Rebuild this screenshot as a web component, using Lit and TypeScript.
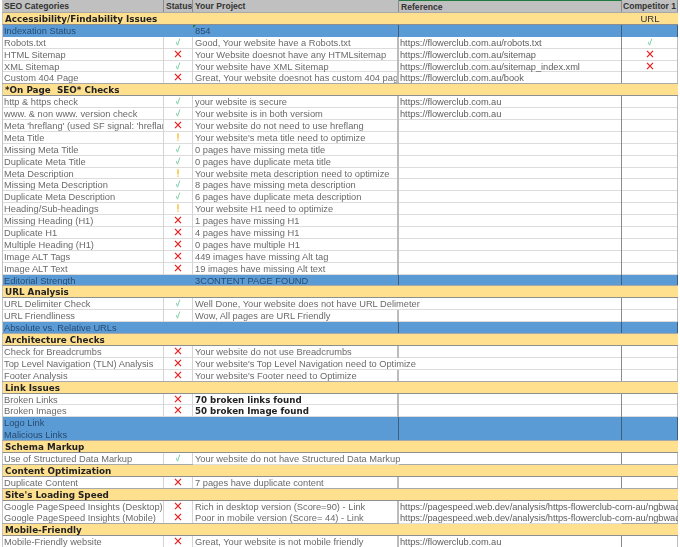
import { LitElement, html, css } from "lit";
import { customElement } from "lit/decorators.js";

type Mark = "ok" | "no" | "warn" | "";
type Row =
  | { kind: "section"; label: string; extra?: string }
  | { kind: "blue"; label: string; project?: string; tick?: boolean }
  | {
      kind: "data";
      label: string;
      mark: Mark;
      project: string;
      ref?: string;
      comp?: Mark;
      bold?: boolean;
      spill?: boolean;
      refSpill?: boolean;
    };

const sec = (label: string, extra?: string): Row => ({ kind: "section", label, extra });
const blue = (label: string, project?: string, tick?: boolean): Row => ({ kind: "blue", label, project, tick });
const row = (label: string, mark: Mark, project: string, ref = "", comp: Mark = ""): Row => ({
  kind: "data",
  label,
  mark,
  project,
  ref,
  comp,
});
const spill = (label: string, mark: Mark, project: string): Row => ({
  kind: "data",
  label,
  mark,
  project,
  spill: true,
});
const bold = (label: string, mark: Mark, project: string): Row => ({
  kind: "data",
  label,
  mark,
  project,
  bold: true,
});
const speed = (label: string, project: string): Row => ({
  kind: "data",
  label,
  mark: "no",
  project,
  ref: SPEED,
  refSpill: true,
});

const SITE = "https://flowerclub.com.au";
const SPEED = "https://pagespeed.web.dev/analysis/https-flowerclub-com-au/ngbwadmxyz";

const rows: Row[] = [
  sec("Accessibility/Findability Issues", "URL"),
  blue("Indexation Status", "854", true),
  row("Robots.txt", "ok", "Good, Your website have a Robots.txt", SITE + "/robots.txt", "ok"),
  row("HTML Sitemap", "no", "Your Website doesnot have any HTMLsitemap", SITE + "/sitemap", "no"),
  row("XML Sitemap", "ok", "Your website have XML Sitemap", SITE + "/sitemap_index.xml", "no"),
  row("Custom 404 Page", "no", "Great, Your website doesnot has custom 404 page", SITE + "/book"),
  sec("*On Page  SEO* Checks"),
  row("http & https check", "ok", "your website is secure", SITE),
  row("www. & non www. version check", "ok", "Your website is in both versiom", SITE),
  row("Meta 'hreflang' (used SF signal: 'hreflang')", "no", "Your website do not need to use hreflang"),
  row("Meta Title", "warn", "Your website's meta title need to optimize"),
  row("Missing Meta Title", "ok", "0 pages have missing meta title"),
  row("Duplicate Meta Title", "ok", "0 pages have duplicate meta title"),
  row("Meta Description", "warn", "Your website meta description need to optimize"),
  row("Missing Meta Description", "ok", "8 pages have missing meta description"),
  row("Duplicate Meta Description", "ok", "6 pages have duplicate meta description"),
  row("Heading/Sub-headings", "warn", "Your website H1 need to optimize"),
  row("Missing Heading (H1)", "no", "1 pages have missing H1"),
  row("Duplicate H1", "no", "4 pages have missing H1"),
  row("Multiple Heading (H1)", "no", "0 pages have multiple H1"),
  row("Image ALT Tags", "no", "449 images have missing Alt tag"),
  row("Image ALT Text", "no", "19 images have missing Alt text"),
  blue("Editorial Strength", "3CONTENT PAGE FOUND"),
  sec("URL Analysis"),
  spill("URL Delimiter Check", "ok", "Well Done, Your website does not have URL Delimeter"),
  row("URL Friendliness", "ok", "Wow, All pages are URL Friendly"),
  blue("Absolute vs. Relative URLs"),
  sec("Architecture Checks"),
  row("Check for Breadcrumbs", "no", "Your website do not use Breadcrumbs"),
  spill("Top Level Navigation (TLN) Analysis", "no", "Your website's Top Level Navigation need to Optimize"),
  row("Footer Analysis", "no", "Your website's Footer need to Optimize"),
  sec("Link Issues"),
  bold("Broken Links", "no", "70 broken links found"),
  bold("Broken Images", "no", "50 broken Image found"),
  blue("Logo Link"),
  blue("Malicious Links"),
  sec("Schema Markup"),
  spill("Use of Structured Data Markup", "ok", "Your website do not have Structured Data Markup"),
  sec("Content Optimization"),
  row("Duplicate Content", "no", "7 pages have duplicate content"),
  sec("Site's Loading Speed"),
  speed("Google PageSpeed Insights (Desktop)", "Rich in desktop version (Score=90) - Link"),
  speed("Google PageSpeed Insights (Mobile)", "Poor in mobile version (Score= 44) - Link"),
  sec("Mobile-Friendly"),
  row("Mobile-Friendly website", "no", "Great, Your website is not mobile friendly", SITE),
];

@customElement("app-root")
export class AppRoot extends LitElement {
  private mark(m?: Mark) {
    if (m === "ok") {
      return html`<svg class="icon" viewBox="0 0 8 10">
        <path d="M2.2 5 L3.5 8.2 L5.8 1.6" fill="none" stroke="#7fd0a8" stroke-width="1" />
      </svg>`;
    }
    if (m === "no") {
      return html`<svg class="icon" viewBox="0 0 8 10">
        <path d="M1 1.8 L7 8.2 M7 1.8 L1 8.2" fill="none" stroke="#ee1c1c" stroke-width="1.2" />
      </svg>`;
    }
    if (m === "warn") {
      return html`<svg class="icon" viewBox="0 0 8 10">
        <path d="M4 1.2 V6.5 M4 7.4 V8.8" fill="none" stroke="#f5b81f" stroke-width="1.3" />
      </svg>`;
    }
    return "";
  }

  private renderRow(r: Row) {
    if (r.kind === "section") {
      return html`<div class="row section">
        <div class="label">${r.label}</div>
        <div class="extra">${r.extra ?? ""}</div>
      </div>`;
    }
    if (r.kind === "blue") {
      return html`<div class="row blue">
        <div class="cell first">${r.label}</div>
        <div class="cell"></div>
        <div class="cell text wide ${r.tick ? "tick" : ""}">${r.project ?? ""}</div>
        <div class="cell"></div>
        <div class="cell"></div>
      </div>`;
    }
    return html`<div class="row data">
      <div class="cell first">${r.label}</div>
      <div class="cell status">${this.mark(r.mark)}</div>
      <div class="cell text wide ${r.bold ? "bold" : ""} ${r.spill ? "spill" : ""}">${r.project}</div>
      <div class="cell ref ${r.refSpill ? "spill" : ""}">${r.ref ?? ""}</div>
      <div class="cell status comp">${this.mark(r.comp)}</div>
    </div>`;
  }

  render() {
    return html`
      <div class="sheet">
        <div class="row head">
          <div class="cell first">SEO Categories</div>
          <div class="cell status-head">Status</div>
          <div class="cell text">Your Project</div>
          <div class="cell text active">Reference</div>
          <div class="cell title-comp">Competitor 1</div>
        </div>
        ${rows.map((r) => this.renderRow(r))}
      </div>
    `;
  }

  static styles = css`
    :host {
      display: block;
      width: 680px;
      height: 547px;
      overflow: hidden;
      background: #fff;
      font-family: "Liberation Sans", Arial, sans-serif;
      font-size: 9.3px;
      color: #6a6a6a;
    }
    .sheet {
      width: 678px;
      padding-left: 2px;
      box-sizing: border-box;
      filter: blur(0.3px);
    }
    .row {
      display: grid;
      grid-template-columns: 161px 29px 206px 223px 56px;
      height: 11.9px;
      line-height: 12px;
      white-space: nowrap;
      box-sizing: border-box;
      border-left: 1px solid #c4c4c4;
      overflow: hidden;
    }
    .cell {
      min-width: 0;
      overflow: hidden;
      box-sizing: border-box;
      border-right: 1px solid #d4d4d4;
      box-shadow: inset 0 -1px 0 #dcdcdc;
    }
    .first {
      padding-left: 1px;
    }
    .text {
      padding-left: 2px;
    }
    .wide {
      border-right: 2px solid #bcbcbc;
    }
    .ref {
      padding-left: 1px;
      color: #5e5e5e;
      border-right-color: #8a8a8a;
      letter-spacing: -0.06px;
    }
    .comp {
      border-right-color: #bcbcbc;
    }
    .status {
      display: flex;
      align-items: flex-start;
      justify-content: center;
    }
    .icon {
      width: 8px;
      height: 10px;
    }
    .bold {
      font-family: "DejaVu Sans", sans-serif;
      font-weight: 700;
      font-size: 8.7px;
      color: #222;
    }
    .spill {
      overflow: visible;
      border-right: 0;
      position: relative;
      z-index: 1;
    }
    .head {
      height: 13px;
      background: #c0c0c0;
      font-weight: 700;
      font-size: 8.6px;
      color: #333;
    }
    .head .cell {
      border-right-color: #8c8c8c;
      box-shadow: inset 0 -1px 0 #8c8c8c;
      line-height: 13px;
    }
    .head .status-head {
      padding-left: 2px;
    }
    .head .active {
      border-top: 1px solid #1f7a3e;
      line-height: 12px;
    }
    .head .title-comp {
      text-align: center;
    }
    .section {
      grid-template-columns: 619px 56px;
      position: relative;
      background: #ffe08f;
      border-bottom: 1px solid #8e8e8e;
      box-shadow: 0 -1px 0 #a8a8a8;
      font-family: "DejaVu Sans", sans-serif;
      font-weight: 700;
      font-size: 8.8px;
      color: #222;
    }
    .section .label {
      padding-left: 2px;
      white-space: pre;
    }
    .section .extra {
      text-align: center;
      font-family: "Liberation Sans", Arial, sans-serif;
      font-weight: 400;
      font-size: 9.5px;
      color: #333;
    }
    .blue {
      background: #5b9bd5;
      color: #264a70;
    }
    .blue .cell {
      box-shadow: none;
      border-right: 0;
    }
    .blue .cell:nth-child(3),
    .blue .cell:nth-child(4),
    .blue .cell:nth-child(5) {
      border-right: 1px solid #3c5f80;
    }
    .tick {
      position: relative;
    }
    .tick::before {
      content: "";
      position: absolute;
      left: 0;
      top: 0;
      border-top: 3px solid #1f7a3e;
      border-right: 3px solid transparent;
    }
  `;
}
